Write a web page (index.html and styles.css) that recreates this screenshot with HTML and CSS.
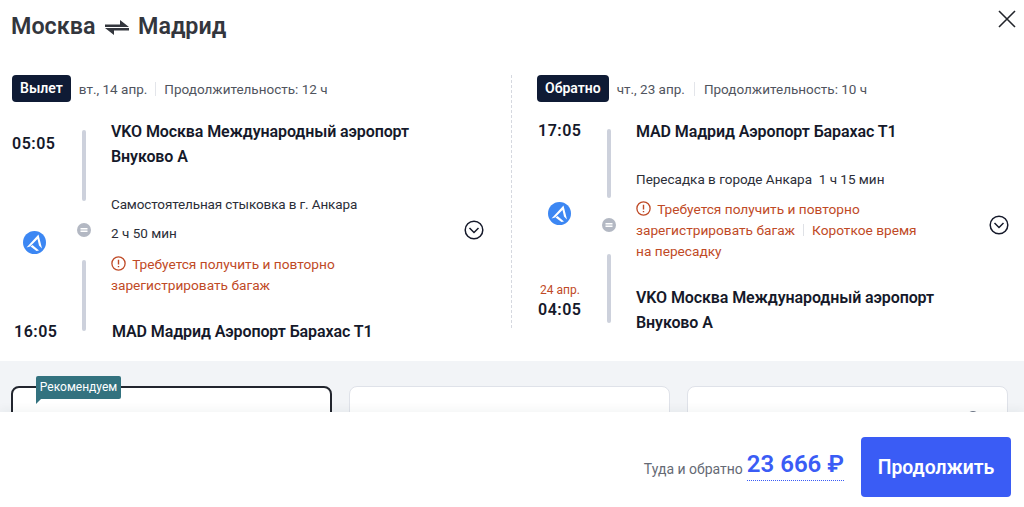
FILE: index.html
```html
<!DOCTYPE html>
<html lang="en">
<head>
    <meta charset="UTF-8">
    <meta name="viewport" content="width=device-width, initial-scale=1.0">
    <title>Москва - Мадрид</title>
    <link rel="stylesheet" href="styles.css">
</head>
<body>
    <div class="top">
        <header class="head">
            <h1>Москва
                <svg class="swap" width="24" height="15" viewBox="0 0 24 15"><path d="M0 4.500h15V0l9 7H0zM24 8v2.500H9V15L0 8z" fill="#33363d"/></svg>
                Мадрид</h1>
            <button class="close" type="button" aria-label="Закрыть">
                <svg width="18" height="18" viewBox="0 0 18 18"><path d="M1 1l16 16M17 1L1 17" stroke="#22252b" stroke-width="1.600" fill="none"/></svg>
            </button>
        </header>

        <div class="legs">
            <section class="leg leg-out">
                <div class="leg-head">
                    <span class="tag">Вылет</span>
                    <span class="meta">вт., 14 апр.</span>
                    <span class="meta meta-sep">Продолжительность: 12 ч</span>
                </div>
                <div class="leg-body">
                    <div class="times">
                        <div class="time time-first">05:05</div>
                        <svg class="logo" width="23" height="23" viewBox="0 0 23 23"><circle cx="11.500" cy="11.500" r="11.500" fill="#3c87f3"/><path d="M3.500 16.500L15.500 3.500 19 17.500 16 14.500 14.500 8 7 15.500z" fill="#fff"/><path d="M9.500 14l6.500 5.500-2.500.5-6-4.500z" fill="#fff"/></svg>
                        <div class="time">16:05</div>
                    </div>
                    <div class="rail">
                        <span class="seg"></span>
                        <svg class="stop" width="14" height="14" viewBox="0 0 14 14"><circle cx="7" cy="7" r="7" fill="#b3b8c3"/><path d="M3.500 5.700h7M10.500 8.300h-7" stroke="#fff" stroke-width="1.400" fill="none"/></svg>
                        <span class="seg seg-last"></span>
                    </div>
                    <div class="info">
                        <div class="airport">VKO Москва Международный аэропорт<br>Внуково А</div>
                        <div class="note note-self">Самостоятельная стыковка в г. Анкара</div>
                        <div class="note note-wait">2 ч 50 мин</div>
                        <div class="warn">
                            <svg class="warn-icon" width="15" height="15" viewBox="0 0 15 15"><circle cx="7.500" cy="7.500" r="6.600" stroke="#bf4a26" stroke-width="1.300" fill="none"/><path d="M7.500 3.800v4.600M7.500 10v1.300" stroke="#bf4a26" stroke-width="1.400" fill="none"/></svg>
                            Требуется получить и повторно<br>зарегистрировать багаж
                        </div>
                        <div class="airport airport-end">MAD Мадрид Аэропорт Барахас Т1</div>
                    </div>
                    <svg class="chev" width="20" height="20" viewBox="0 0 20 20"><circle cx="10" cy="10" r="8.800" stroke="#15192a" stroke-width="1.500" fill="none"/><path d="M5.500 8l4.500 4.500L14.500 8" stroke="#15192a" stroke-width="1.500" fill="none"/></svg>
                </div>
            </section>

            <section class="leg leg-back">
                <div class="leg-head">
                    <span class="tag">Обратно</span>
                    <span class="meta">чт., 23 апр.</span>
                    <span class="meta meta-sep">Продолжительность: 10 ч</span>
                </div>
                <div class="leg-body">
                    <div class="times">
                        <div class="time time-first">17:05</div>
                        <svg class="logo" width="23" height="23" viewBox="0 0 23 23"><circle cx="11.500" cy="11.500" r="11.500" fill="#3c87f3"/><path d="M3.500 16.500L15.500 3.500 19 17.500 16 14.500 14.500 8 7 15.500z" fill="#fff"/><path d="M9.500 14l6.500 5.500-2.500.5-6-4.500z" fill="#fff"/></svg>
                        <div class="next-day">24 апр.</div>
                        <div class="time">04:05</div>
                    </div>
                    <div class="rail">
                        <span class="seg"></span>
                        <svg class="stop" width="14" height="14" viewBox="0 0 14 14"><circle cx="7" cy="7" r="7" fill="#b3b8c3"/><path d="M3.500 5.700h7M10.500 8.300h-7" stroke="#fff" stroke-width="1.400" fill="none"/></svg>
                        <span class="seg seg-last"></span>
                    </div>
                    <div class="info">
                        <div class="airport">MAD Мадрид Аэропорт Барахас Т1</div>
                        <div class="note note-self">Пересадка в городе Анкара&nbsp; 1 ч 15 мин</div>
                        <div class="warn">
                            <svg class="warn-icon" width="15" height="15" viewBox="0 0 15 15"><circle cx="7.500" cy="7.500" r="6.600" stroke="#bf4a26" stroke-width="1.300" fill="none"/><path d="M7.500 3.800v4.600M7.500 10v1.300" stroke="#bf4a26" stroke-width="1.400" fill="none"/></svg>
                            Требуется получить и повторно<br>зарегистрировать багаж<span class="warn-sep"></span>Короткое время<br>на пересадку
                        </div>
                        <div class="airport airport-end">VKO Москва Международный аэропорт<br>Внуково А</div>
                    </div>
                    <svg class="chev" width="20" height="20" viewBox="0 0 20 20"><circle cx="10" cy="10" r="8.800" stroke="#15192a" stroke-width="1.500" fill="none"/><path d="M5.500 8l4.500 4.500L14.500 8" stroke="#15192a" stroke-width="1.500" fill="none"/></svg>
                </div>
            </section>
        </div>
    </div>

    <div class="fares">
        <div class="fare fare-active"><span class="badge">Рекомендуем</span></div>
        <div class="fare"></div>
        <div class="fare"><span class="fare-dot"></span></div>
    </div>

    <footer class="foot">
        <span class="foot-label">Туда и обратно</span>
        <span class="price">23 666 ₽</span>
        <button class="go" type="button">Продолжить</button>
    </footer>
</body>
</html>
```

FILE: styles.css
```css
* {
    box-sizing: border-box;
}
body {
    margin: 0;
    height: 507px;
    overflow: hidden;
    display: flex;
    flex-direction: column;
    font-family: 'Roboto', 'Inter', sans-serif;
    color: #15192a;
    background-color: #fff;
}
.top {
    height: 361px;
}
.head {
    display: flex;
    justify-content: space-between;
    align-items: flex-start;
    height: 75px;
    padding: 12px 8px 0 11px;
}
h1 {
    margin: 0;
    font-size: 23.300px;
    line-height: 29px;
    font-weight: 600;
    color: #33363d;
}
.swap {
    margin: 0 3px 0 4px;
    vertical-align: -1px;
}
.close {
    border: none;
    background: none;
    padding: 0;
    margin-top: -2px;
}
.legs {
    display: flex;
}
.leg {
    height: 253px;
}
.leg-out {
    width: 512px;
    padding-left: 12px;
    border-right: 1px dashed #d5d8df;
}
.leg-back {
    width: 512px;
    padding-left: 25px;
}
.leg-head {
    display: flex;
    align-items: center;
    height: 27px;
}
.tag {
    height: 27px;
    padding: 0 8px;
    border-radius: 4px;
    background-color: #0f1b35;
    color: #fff;
    font-size: 14px;
    line-height: 27px;
    font-weight: 600;
}
.meta {
    margin-left: 8px;
    font-size: 13.500px;
    color: #50545e;
}
.meta-sep {
    margin-left: 9px;
    padding-left: 9px;
    border-left: 1px solid #e3e5ea;
    line-height: 14px;
}
.leg-out .meta-sep {
    margin-left: 8px;
    padding-left: 8px;
}
.leg-body {
    display: flex;
    position: relative;
}
.times {
    width: 70px;
    height: 231px;
    flex: none;
    display: flex;
    flex-direction: column;
    align-items: flex-start;
}
.time {
    font-size: 16px;
    line-height: 20px;
    font-weight: 600;
    letter-spacing: 0.5px;
}
.logo {
    flex: none;
}
.leg-out .time-first {
    margin-top: 32px;
}
.leg-out .logo {
    margin: 77px 0 0 11px;
}
.leg-out .times .time:last-child {
    margin-top: 68px;
    padding-left: 2px;
}
.leg-back .time-first {
    margin-top: 19px;
    padding-left: 1px;
}
.leg-back .logo {
    margin: 61px 0 0 11px;
}
.next-day {
    width: 46px;
    margin-top: 57px;
    text-align: center;
    font-size: 12px;
    line-height: 16px;
    color: #bf4a26;
}
.next-day + .time {
    margin-top: 2px;
    padding-left: 1px;
}
.rail {
    width: 4px;
    display: flex;
    flex-direction: column;
    align-items: center;
    margin-top: 28px;
}
.seg {
    width: 4px;
    height: 71px;
    border-radius: 2px;
    flex: none;
    background-color: #cdd1dc;
}
.stop {
    flex: none;
    margin: 22px 0 23px;
}
.leg-back .rail {
    margin-top: 27px;
}
.leg-back .seg {
    height: 69px;
}
.leg-back .stop {
    margin: 20px 0 22px;
}
.info {
    width: 362px;
    margin-left: 25px;
    padding-top: 17px;
    flex: none;
}
.airport {
    font-size: 16px;
    line-height: 25px;
    font-weight: 600;
    letter-spacing: -0.1px;
}
.note {
    font-size: 13.500px;
    line-height: 20px;
    color: #2b2e38;
}
.note-self {
    margin-top: 25px;
}
.leg-out .note-self {
    letter-spacing: -0.13px;
}
.note-wait {
    margin-top: 9px;
}
.warn {
    margin-top: 11px;
    font-size: 13.700px;
    line-height: 21px;
    color: #bf4a26;
}
.warn-icon {
    vertical-align: -2px;
    margin-right: 3px;
}
.warn-sep {
    display: inline-block;
    width: 1px;
    height: 12px;
    margin: 0 8px;
    vertical-align: -1px;
    background-color: #dfe1e6;
}
.airport-end {
    margin-top: 23px;
    padding-left: 1px;
}
.leg-back .warn {
    margin-top: 10px;
}
.leg-back .airport-end {
    padding-left: 0;
}
.chev {
    position: absolute;
    top: 118px;
    left: 452px;
}
.leg-back .chev {
    top: 113px;
    left: 452px;
}
.fares {
    flex: none;
    height: 51px;
    overflow: hidden;
    display: flex;
    gap: 17px;
    padding: 25px 0 0 11px;
    background-color: #f2f4f7;
}
.fare {
    position: relative;
    flex: none;
    width: 321px;
    height: 90px;
    border: 1px solid #dfe2e9;
    border-radius: 8px;
    background-color: #fff;
}
.fare-active {
    border: 2px solid #22252e;
}
.badge {
    position: absolute;
    top: -12px;
    left: 23px;
    width: 85px;
    height: 23px;
    border-radius: 2px 2px 2px 0;
    background-color: #33727f;
    color: #fff;
    font-size: 12px;
    line-height: 23px;
    text-align: center;
}
.badge::after {
    content: "";
    position: absolute;
    left: 0;
    top: 23px;
    border-top: 5px solid #33727f;
    border-right: 5px solid transparent;
}
.fare-dot {
    position: absolute;
    top: 24px;
    right: 28px;
    width: 12px;
    height: 12px;
    border-radius: 50%;
    background-color: #6f7788;
}
.foot {
    flex: 1;
    display: flex;
    justify-content: flex-end;
    align-items: flex-start;
    padding: 25px 13px 0 0;
    background-color: #fff;
    box-shadow: 0 -4px 8px rgba(30, 40, 60, 0.04);
    position: relative;
}
.foot-label {
    margin-top: 23px;
    font-size: 14px;
    line-height: 18px;
    color: #656a75;
}
.price {
    margin: 9px 17px 0 4px;
    padding-top: 4px;
    border-bottom: 1px dotted #3a5cf5;
    height: 35px;
    font-size: 24px;
    line-height: 28px;
    font-weight: 600;
    color: #3a5cf5;
    white-space: nowrap;
}
.go {
    width: 150px;
    height: 60px;
    border: none;
    border-radius: 4px;
    background-color: #3a5cf5;
    color: #fff;
    font-family: inherit;
    font-size: 19.400px;
    font-weight: 600;
}
```
